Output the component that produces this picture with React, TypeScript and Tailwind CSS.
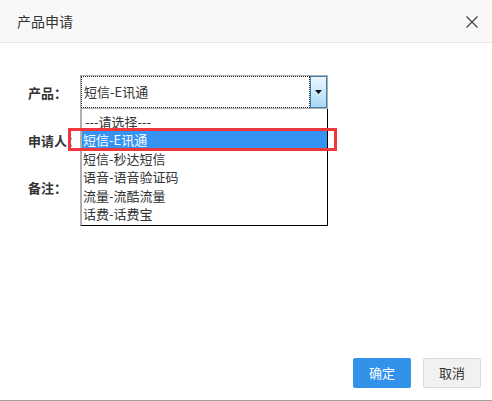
import React from "react";

const font = { fontFamily: '"Noto Sans CJK SC", "Noto Sans", sans-serif' };

const options = ["---请选择---", "短信-E讯通", "短信-秒达短信", "语音-语音验证码", "流量-流酷流量", "话费-话费宝"];

export default function App() {
  return (
    <div style={font} className="w-[492px] h-[401px] flex flex-col bg-white border-b border-[#a3a3a3] text-[#333]">
      <div className="h-[43px] shrink-0 bg-[#f8f8f8] border-b border-[#e8e8e8] flex items-center justify-between pl-[17px] pr-[14px]">
        <span className="text-[14px] text-[#333] leading-none">产品申请</span>
        <svg width="12" height="12" viewBox="0 0 12 12" className="mt-[2px]">
          <path d="M0.5 0.5 L11.5 11.5 M11.5 0.5 L0.5 11.5" stroke="#444" strokeWidth="1.3" fill="none" />
        </svg>
      </div>
      <div className="flex-1 relative pt-[32px] pl-[28px]">
        <div className="flex items-center h-[34px]">
          <div className="w-[52px] text-[13px] font-bold leading-none">产品：</div>
          <div className="relative w-[248px] h-[34px] border border-[#b0b0b0] flex">
            <div className="flex-1 border border-dotted border-[#222] flex items-center pl-[2px] text-[13px] text-[#333]">
              短信-E讯通
            </div>
            <div className="w-[17px] h-full border border-[#3c7fb1] bg-gradient-to-b from-[#eef7fe] to-[#a9d8f5] flex items-center justify-center">
              <svg width="7" height="4" viewBox="0 0 7 4">
                <path d="M0 0 H7 L3.5 4 Z" fill="#111" />
              </svg>
            </div>
            <div className="absolute left-[-1px] top-[33px] w-[248px] h-[117px] bg-white border-l-2 border-l-[#b0b0b0] border-r border-r-black border-b border-b-black pt-[3px] z-10">
              {options.map((o, i) => (
                <div
                  key={o}
                  className={
                    i === 1
                      ? "h-[18.5px] flex items-center pl-[1px] text-[13px] bg-[#3594f3] text-white"
                      : "h-[18.5px] flex items-center pl-[1px] text-[13px] text-[#333]"
                  }
                >
                  {i === 0 ? <span className="pl-[2px]">{o}</span> : o}
                </div>
              ))}
            </div>
          </div>
        </div>
        <div className="flex items-center h-[34px] mt-[14px]">
          <div className="w-[52px] text-[13px] font-bold leading-none">申请人：</div>
        </div>
        <div className="flex items-center h-[34px] mt-[13px]">
          <div className="w-[52px] text-[13px] font-bold leading-none">备注：</div>
        </div>
        <div className="absolute left-[68px] top-[85px] w-[269px] h-[23px] border-[3px] border-[#f0373c] z-20 pointer-events-none" />
      </div>
      <div className="flex justify-end gap-[12px] pr-[11px] pb-[12px]">
        <button className="w-[58px] h-[30px] bg-[#3291e8] text-white text-[13px] rounded-[2px]">确定</button>
        <button className="w-[58px] h-[30px] bg-[#f1f1f1] border border-[#dcdcdc] text-[#333] text-[13px] rounded-[2px]">取消</button>
      </div>
    </div>
  );
}
